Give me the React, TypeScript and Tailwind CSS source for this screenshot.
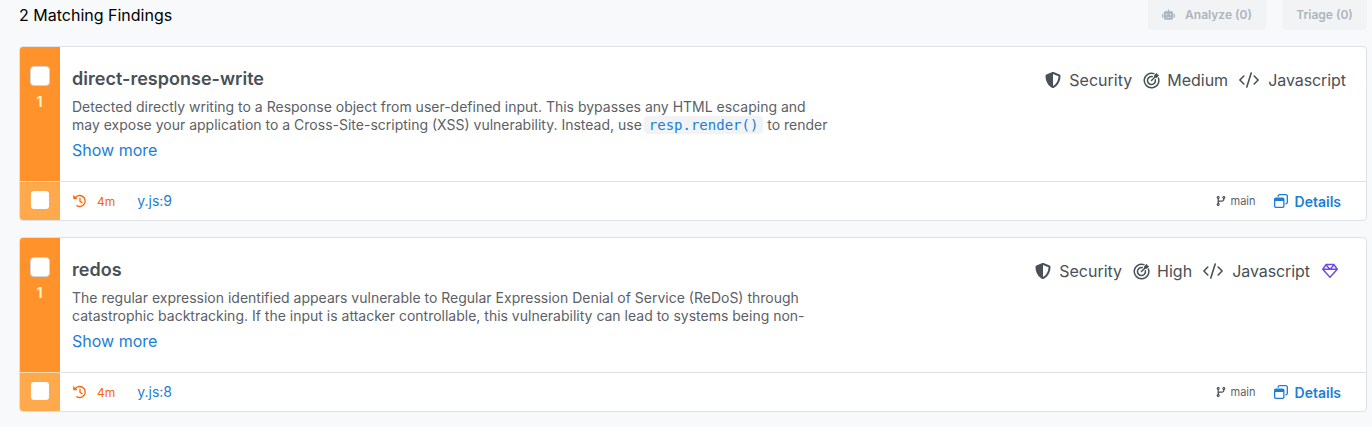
import React from "react";
import { FaRobot, FaRegGem, FaRegWindowRestore, FaCodeBranch } from "react-icons/fa6";
import { FaShieldAlt } from "react-icons/fa";

type Finding = {
  rule: string;
  severity: string;
  file: string;
  premium?: boolean;
  description: React.ReactNode;
};

const findings: Finding[] = [
  {
    rule: "direct-response-write",
    severity: "Medium",
    file: "y.js:9",
    description: (
      <>
        Detected directly writing to a Response object from user-defined input. This bypasses any HTML escaping and
        <br />
        may expose your application to a Cross-Site-scripting (XSS) vulnerability. Instead, use{" "}
        <code className="-ml-[2px] rounded bg-[#f1f3f5] px-[5px] py-px font-['DejaVu_Sans_Mono',monospace] text-[14px] leading-4 text-[#1c7ed6]">
          resp.render()
        </code>{" "}
        to render
      </>
    ),
  },
  {
    rule: "redos",
    severity: "High",
    file: "y.js:8",
    premium: true,
    description: (
      <>
        The regular expression identified appears vulnerable to Regular Expression Denial of Service (ReDoS) through
        <br />
        catastrophic backtracking. If the input is attacker controllable, this vulnerability can lead to systems being non-
      </>
    ),
  },
];

function CodeIcon() {
  return (
    <svg width="20" height="16" viewBox="0 0 20 16" fill="none" stroke="currentColor" strokeWidth="1.600" strokeLinecap="round" strokeLinejoin="round">
      <path d="M4.800 4 .9 8 4.800 12M15.200 4l3.900 4-3.900 4M12.200 1 7.800 15" />
    </svg>
  );
}

function TargetIcon() {
  return (
    <svg width="17" height="17" viewBox="0 0 17 17" fill="none" stroke="currentColor" strokeWidth="1.500" strokeLinecap="round" strokeLinejoin="round">
      <path d="M11 1.600A7.300 7.300 0 1 0 15.400 6" />
      <path d="M9.200 4.600A4 4 0 1 0 12.400 7.800" />
      <path d="M8.500 8.500 12.500 4.500" />
      <path d="M11.600 3.400 13.600 1.300 14.100 2.900 15.700 3.400 13.600 5.500 12 5Z" fill="currentColor" strokeWidth="1" />
    </svg>
  );
}

function HistoryIcon() {
  return (
    <svg width="14" height="14" viewBox="0 0 14 14" fill="none" stroke="currentColor" strokeWidth="1.300" strokeLinecap="round" strokeLinejoin="round">
      <path d="M2 4.100A5.500 5.500 0 1 1 3.800 11.700M7 4.200v3l2 1.600" />
      <path d="M.6 1.800v3h3Z" fill="currentColor" strokeWidth=".7" />
    </svg>
  );
}

function FindingCard({ finding }: { finding: Finding }) {
  return (
    <section className="flex h-[175px] flex-col overflow-hidden rounded border border-[#dee2e6] bg-white">
      <div className="flex h-[135px] border-b border-[#dee2e6]">
        <div className="-mb-px flex w-10 shrink-0 flex-col items-center border-b border-[#ffd8a8] bg-[#ff922b] pt-[19px]">
          <span className="size-5 rounded border border-[#ced4da] bg-white" />
          <span className="mt-[7px] mr-px text-[14px] leading-[18px] font-bold text-[#fff3bf]">1</span>
        </div>
        <div className="flex flex-1 flex-col pt-[18px] pl-3">
          <h2 className="text-[18px] leading-7 font-semibold tracking-[0.02px] text-[#495057]">{finding.rule}</h2>
          <p className="mt-[5px] text-[14px] leading-[18px] whitespace-nowrap text-[#5c5f66]">{finding.description}</p>
          <a className="mt-1 text-[16px] leading-6 text-[#1c7ed6]">Show more</a>
        </div>
        <div className={`flex h-6 items-center text-[16px] leading-6 text-[#495057] ${finding.premium ? "pr-7" : "pr-5"} mt-[21px]`}>
          <FaShieldAlt size={16} />
          <span className="ml-2">Security</span>
          <span className="ml-[11px]"><TargetIcon /></span>
          <span className="ml-[7px]">{finding.severity}</span>
          <span className="ml-[11px]"><CodeIcon /></span>
          <span className="ml-[9px] tracking-[-0.07px]">Javascript</span>
          {finding.premium && <FaRegGem size={16} className="ml-3 text-[#7048e8]" />}
        </div>
      </div>
      <div className="flex flex-1 items-center">
        <div className="flex w-10 shrink-0 justify-center self-stretch bg-[#ffa94d] pt-[9px]">
          <span className="size-[18px] rounded-[3px] bg-white" />
        </div>
        <span className="ml-[13px] text-[#f76707]"><HistoryIcon /></span>
        <span className="ml-[10px] pt-px text-[12px] text-[#f76707]">4m</span>
        <a className="ml-[22px] pb-px text-[14px] text-[#1c7ed6]">{finding.file}</a>
        <FaCodeBranch size={10} className="ml-auto text-[#495057]" />
        <span className="ml-[5px] text-[11px] text-[#5c5f66]">main</span>
        <a className="mr-[25px] ml-[18px] flex items-center gap-[6px] text-[14px] font-semibold text-[#1c7ed6]">
          <FaRegWindowRestore size={14} className="mr-px mb-px" />
          Details
        </a>
      </div>
    </section>
  );
}

export default function App() {
  return (
    <main className="h-[427px] overflow-hidden bg-[#f8f9fa] pr-[5px] pl-[19px] font-['Inter',sans-serif]">
      <header className="flex h-[46px] items-start justify-between">
        <h1 className="pt-[3px] text-[16px] leading-6 text-black">2 Matching Findings</h1>
        <div className="flex gap-4 text-[12px] font-semibold text-[#adb5bd]">
          <button className="flex h-[30px] w-[118px] items-center justify-center gap-[10px] rounded-b bg-[#f1f3f5]">
            <FaRobot size={13} className="mb-[2px]" />
            Analyze (0)
          </button>
          <button className="h-[30px] w-[85px] rounded-b bg-[#f1f3f5]">Triage (0)</button>
        </div>
      </header>
      <div className="flex flex-col gap-4">
        {findings.map((finding) => (
          <FindingCard key={finding.rule} finding={finding} />
        ))}
      </div>
    </main>
  );
}
